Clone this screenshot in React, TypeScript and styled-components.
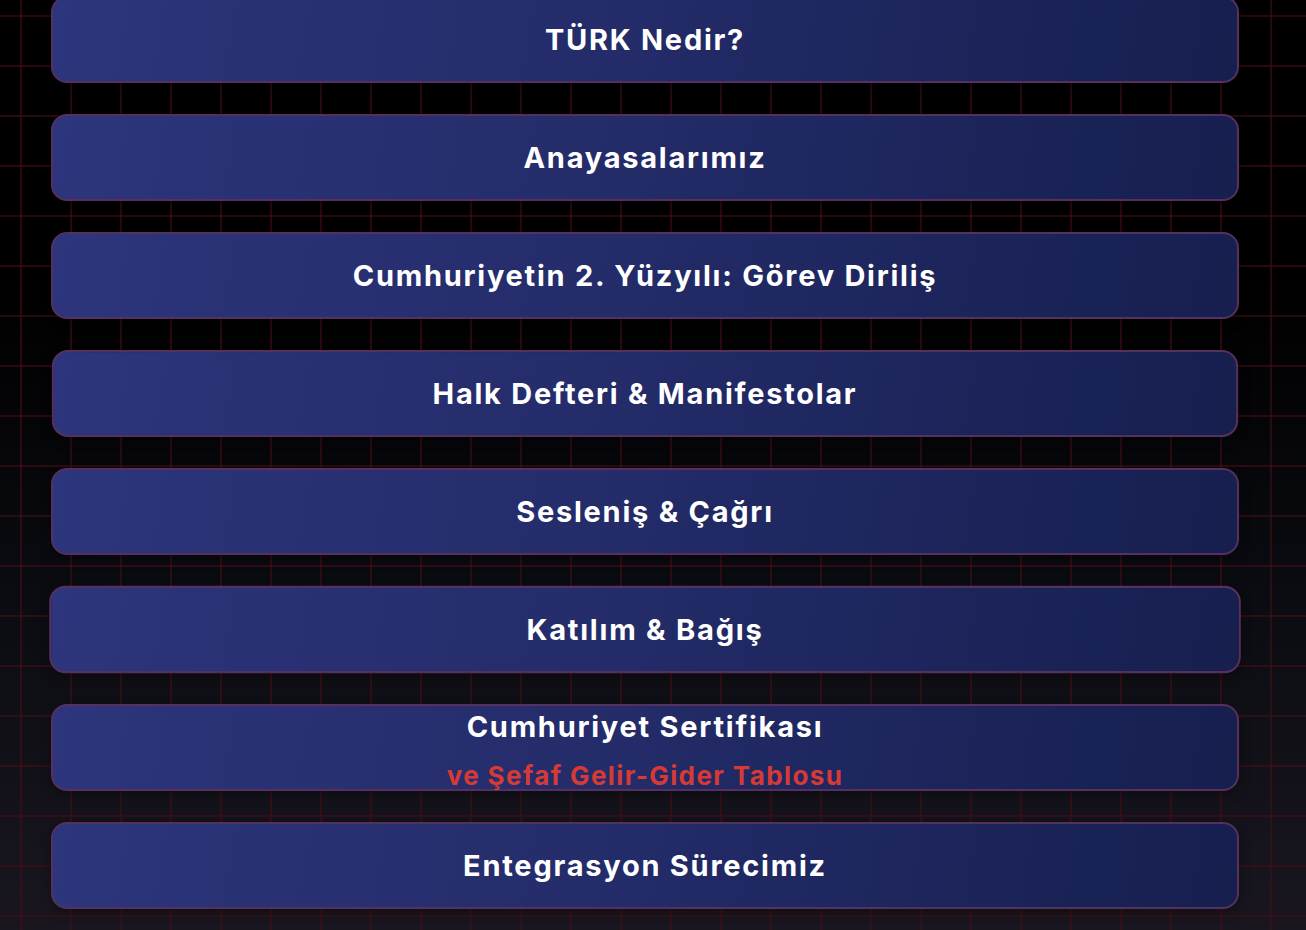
import React from "react";
import styled, { createGlobalStyle } from "styled-components";

const Global = createGlobalStyle`
  html, body { margin: 0; padding: 0; }
  body {
    background: linear-gradient(180deg, #000000 0%, #000000 30%, #0b0c12 65%, #19161f 100%);
    min-height: 930px;
    overflow: hidden;
    font-family: "Inter", "Open Sans", sans-serif;
  }
`;

const Page = styled.div`
  position: relative;
  width: 1306px;
  height: 930px;
  overflow: hidden;
  background-image:
    linear-gradient(90deg, rgba(70, 14, 20, 0.6) 2px, transparent 2px),
    linear-gradient(180deg, rgba(70, 14, 20, 0.6) 2px, transparent 2px);
  background-size: 50px 50px;
  background-position: 20px 15px;
`;

const List = styled.div`
  display: flex;
  flex-direction: column;
  gap: 31px;
  padding: 0 67px 0 51px;
  margin-top: -4px;
`;

const Card = styled.div<{ $scale?: number }>`
  height: 87px;
  box-sizing: border-box;
  border: 2px solid #56305f;
  border-radius: 16px;
  background: linear-gradient(100deg, #2d357c 0%, #232b68 50%, #161f4e 100%);
  display: flex;
  flex-direction: column;
  align-items: center;
  justify-content: center;
  transform: scale(${(p) => p.$scale ?? 1});
  box-shadow: 0 4px 12px rgba(0, 0, 0, 0.3);
`;

const Title = styled.span`
  color: #ffffff;
  font-family: "Inter", "Open Sans", sans-serif;
  font-weight: 700;
  font-size: 29px;
  letter-spacing: 1.75px;
  line-height: 1;
`;

const Stack = styled.div`
  display: flex;
  flex-direction: column;
  align-items: center;
  gap: 21.5px;
  margin-top: 5.5px;
`;

const Sub = styled.span`
  color: #d63a37;
  font-family: "Inter", "Open Sans", sans-serif;
  font-weight: 700;
  font-size: 26px;
  letter-spacing: 1.4px;
  line-height: 1;
`;

const items: { t: string; s?: number }[] = [
  { t: "TÜRK Nedir?" },
  { t: "Anayasalarımız" },
  { t: "Cumhuriyetin 2. Yüzyılı: Görev Diriliş" },
  { t: "Halk Defteri & Manifestolar", s: 0.9985 },
  { t: "Sesleniş & Çağrı" },
  { t: "Katılım & Bağış", s: 1.003 },
];

export default function App() {
  return (
    <Page>
      <Global />
      <List>
        {items.map((i) => (
          <Card key={i.t} $scale={i.s}>
            <Title>{i.t}</Title>
          </Card>
        ))}
        <Card>
          <Stack>
            <Title>Cumhuriyet Sertifikası</Title>
            <Sub>ve Şefaf Gelir-Gider Tablosu</Sub>
          </Stack>
        </Card>
        <Card>
          <Title>Entegrasyon Sürecimiz</Title>
        </Card>
      </List>
    </Page>
  );
}
